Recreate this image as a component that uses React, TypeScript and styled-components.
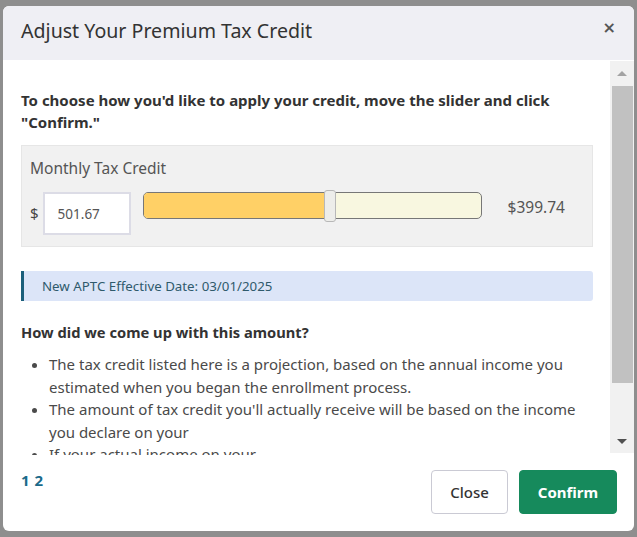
import React from "react";
import styled, { createGlobalStyle } from "styled-components";

const FONT = `"Noto Sans", "Open Sans", sans-serif`;

const Global = createGlobalStyle`
  html, body { margin: 0; padding: 0; background: #8e8e8e; }
  body { font-family: ${FONT}; }
  * { box-sizing: border-box; }
`;

const Page = styled.div`
  width: 637px;
  height: 537px;
  padding: 6px 3px 6px 3px;
  background: #8e8e8e;
`;

const Modal = styled.div`
  width: 631px;
  height: 525px;
  background: #fff;
  border-radius: 6px;
  overflow: hidden;
  display: flex;
  flex-direction: column;
`;

const Header = styled.div`
  height: 54px;
  background: #efeff4;
  display: flex;
  align-items: center;
  justify-content: space-between;
  padding: 0 18px 6px 18px;
`;

const Title = styled.h1`
  margin: 0;
  font-size: 19.6px;
  font-weight: 400;
  color: #333;
`;

const CloseX = styled.button`
  border: 0;
  background: transparent;
  padding: 0;
  font-family: "DejaVu Sans", sans-serif;
  font-size: 16px;
  font-weight: 700;
  color: #555;
  line-height: 1;
  margin: -5px 0 0 0;
`;

const BodyRow = styled.div`
  flex: 1;
  display: flex;
  min-height: 0;
`;

const Content = styled.div`
  flex: 1;
  overflow: hidden;
  padding: 29px 17px 0 18px;
`;

const Instruction = styled.p`
  margin: 0;
  font-size: 15px;
  font-weight: 700;
  line-height: 22px;
  color: #333;
`;

const Panel = styled.div`
  margin-top: 12px;
  background: #f1f1f1;
  border: 1px solid #e6e6e6;
  padding: 11px 8px 11px 8px;
`;

const PanelLabel = styled.div`
  font-size: 15.5px;
  line-height: 22px;
  color: #555;
`;

const SliderRow = styled.div`
  display: flex;
  align-items: flex-start;
  margin-top: 13px;
`;

const Dollar = styled.span`
  font-size: 15px;
  color: #444;
  line-height: 43px;
  margin-right: 4px;
`;

const AmountInput = styled.input`
  width: 88px;
  height: 43px;
  border: 2px solid #dcdce6;
  background: #fff;
  padding: 0 0 0 13px;
  font-family: ${FONT};
  font-size: 13.5px;
  color: #555;
  outline: none;
`;

const Track = styled.div`
  position: relative;
  margin-left: 12px;
  width: 339px;
  height: 27px;
  border: 1.5px solid #777;
  border-radius: 5px;
  background: #f8f7e0;
`;

const Fill = styled.div`
  position: absolute;
  left: 0;
  top: 0;
  bottom: 0;
  background: #ffd066;
  border-radius: 4px 0 0 4px;
`;

const Handle = styled.div`
  position: absolute;
  top: -3px;
  width: 12px;
  height: 32px;
  background: #ededea;
  border: 1px solid #b8b8b8;
  border-radius: 3px;
`;

const Amount = styled.span`
  margin-left: 26px;
  font-size: 15.5px;
  line-height: 31px;
  color: #555;
`;

const InfoBar = styled.div`
  margin-top: 24px;
  height: 30px;
  background: #dce5f8;
  border-left: 3px solid #1b5f7b;
  border-radius: 0 3px 3px 0;
  padding-left: 18px;
  display: flex;
  align-items: center;
  font-size: 13.3px;
  color: #2f5a6c;
`;

const Heading = styled.h2`
  margin: 20px 0 0 0;
  font-size: 14.7px;
  font-weight: 700;
  line-height: 22px;
  color: #333;
`;

const List = styled.ul`
  margin: 10px 0 0 0;
  padding-left: 28px;
`;

const Item = styled.li`
  font-size: 15px;
  line-height: 22.5px;
  color: #4a4a4a;
`;

const ScrollBar = styled.div`
  width: 24px;
  margin-top: 1px;
  margin-bottom: 2px;
  background: #f1f1f1;
  display: flex;
  flex-direction: column;
  align-items: stretch;
`;

const ArrowBox = styled.div`
  height: 24px;
  display: flex;
  align-items: center;
  justify-content: center;
`;

const Arrow = styled.div<{ $dir: "up" | "down" }>`
  width: 0;
  height: 0;
  border-left: 5px solid transparent;
  border-right: 5px solid transparent;
  ${(p) =>
    p.$dir === "up"
      ? "border-bottom: 5px solid #a3a3a3;"
      : "border-top: 5px solid #505050;"}
`;

const Thumb = styled.div`
  height: 297px;
  margin: 1px 1px 0 2px;
  background: #c1c1c1;
`;

const Spacer = styled.div`
  flex: 1;
`;

const Footer = styled.div`
  height: 76px;
  display: flex;
  align-items: flex-start;
  justify-content: space-between;
  padding: 15px 17px 17px 18px;
`;

const Pages = styled.div`
  font-size: 15px;
  font-weight: 700;
  color: #1b6a8a;
  margin-top: 0;
  letter-spacing: 0.5px;
`;

const Buttons = styled.div`
  display: flex;
  gap: 11px;
`;

const Button = styled.button<{ $primary?: boolean }>`
  height: 44px;
  border-radius: 4px;
  font-family: ${FONT};
  font-size: 15px;
  font-weight: ${(p) => (p.$primary ? 700 : 500)};
  padding: 0;
  width: ${(p) => (p.$primary ? "98px" : "77px")};
  background: ${(p) => (p.$primary ? "#168a5c" : "#fff")};
  color: ${(p) => (p.$primary ? "#fff" : "#333")};
  border: ${(p) => (p.$primary ? "1px solid #168a5c" : "1px solid #cacad4")};
`;

export default function App() {
  const pct = (326 - 143) / 339;
  return (
    <Page>
      <Global />
      <Modal>
        <Header>
          <Title>Adjust Your Premium Tax Credit</Title>
          <CloseX aria-label="Close">×</CloseX>
        </Header>
        <BodyRow>
          <Content>
            <Instruction>
              To choose how you'd like to apply your credit, move the slider and click "Confirm."
            </Instruction>
            <Panel>
              <PanelLabel>Monthly Tax Credit</PanelLabel>
              <SliderRow>
                <Dollar>$</Dollar>
                <AmountInput defaultValue="501.67" />
                <Track>
                  <Fill style={{ width: `${pct * 100}%` }} />
                  <Handle style={{ left: `calc(${pct * 100}% - 2px)` }} />
                </Track>
                <Amount>$399.74</Amount>
              </SliderRow>
            </Panel>
            <InfoBar>New APTC Effective Date: 03/01/2025</InfoBar>
            <Heading>How did we come up with this amount?</Heading>
            <List>
              <Item>
                The tax credit listed here is a projection, based on the annual income you estimated
                when you began the enrollment process.
              </Item>
              <Item>
                The amount of tax credit you'll actually receive will be based on the income you
                declare on your
              </Item>
              <Item>If your actual income on your</Item>
            </List>
          </Content>
          <ScrollBar>
            <ArrowBox>
              <Arrow $dir="up" />
            </ArrowBox>
            <Thumb />
            <Spacer />
            <ArrowBox>
              <Arrow $dir="down" />
            </ArrowBox>
          </ScrollBar>
        </BodyRow>
        <Footer>
          <Pages>1 2</Pages>
          <Buttons>
            <Button>Close</Button>
            <Button $primary>Confirm</Button>
          </Buttons>
        </Footer>
      </Modal>
    </Page>
  );
}
